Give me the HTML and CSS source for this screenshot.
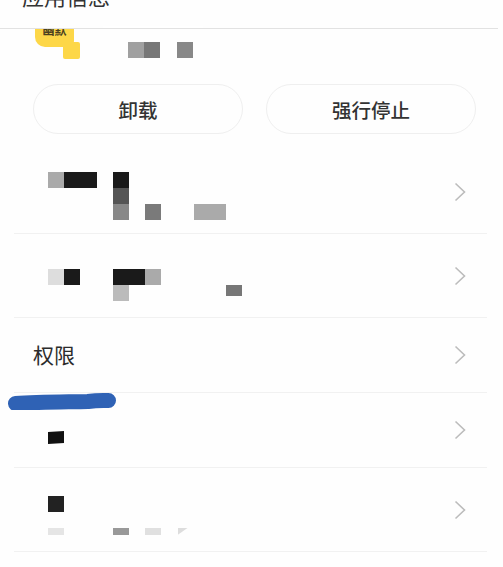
FILE: index.html
```html
<!DOCTYPE html>
<html lang="zh-CN">
<head>
<meta charset="utf-8">
<title>应用信息</title>
<link rel="stylesheet" href="styles.css">
</head>
<body>
<main class="page">
  <header class="header">
    <h1 class="title">应用信息</h1>
    <div class="header-patch"></div>
  </header>

  <section class="app">
    <div class="app-icon">
      <div class="app-icon-body"><span class="app-icon-text">幽默</span></div>
      <div class="app-icon-tail"></div>
    </div>
    <div class="line app-name"><i class="c s-a0"></i><i class="c s-77"></i><i class="c"></i><i class="c s-88"></i></div>
  </section>

  <section class="actions">
    <button class="btn" type="button">卸载</button>
    <button class="btn" type="button">强行停止</button>
  </section>

  <section class="list">
    <div class="row row-1">
      <div class="mosaic m-1">
        <div class="line"><i class="c s-aa"></i><i class="c s-1a"></i><i class="c s-1a"></i><i class="c"></i><i class="c s-1a"></i></div>
        <div class="line"><i class="c"></i><i class="c"></i><i class="c"></i><i class="c"></i><i class="c s-55"></i></div>
        <div class="line"><i class="c"></i><i class="c"></i><i class="c"></i><i class="c"></i><i class="c s-88"></i><i class="c"></i><i class="c s-7a"></i><i class="c"></i><i class="c"></i><i class="c s-aa"></i><i class="c s-aa"></i></div>
      </div>
      <svg class="chev" viewBox="0 0 12 20"><path d="M1.5 1.5 10.5 10 1.5 18.5"/></svg>
    </div>

    <div class="row row-2">
      <div class="mosaic m-2">
        <div class="line"><i class="c s-dd"></i><i class="c s-1a"></i><i class="c"></i><i class="c"></i><i class="c s-1a"></i><i class="c s-1a"></i><i class="c s-aa"></i></div>
        <div class="line"><i class="c"></i><i class="c"></i><i class="c"></i><i class="c"></i><i class="c s-bb"></i><i class="c"></i><i class="c"></i><i class="c"></i><i class="c"></i><i class="c"></i><i class="c"></i><i class="c short s-77"></i></div>
      </div>
      <svg class="chev" viewBox="0 0 12 20"><path d="M1.5 1.5 10.5 10 1.5 18.5"/></svg>
    </div>

    <div class="row row-3">
      <span class="row-label">权限</span>
      <svg class="chev" viewBox="0 0 12 20"><path d="M1.5 1.5 10.5 10 1.5 18.5"/></svg>
    </div>

    <div class="row row-4">
      <div class="mosaic m-4">
        <div class="line"><i class="c skew s-11"></i></div>
      </div>
      <svg class="chev" viewBox="0 0 12 20"><path d="M1.5 1.5 10.5 10 1.5 18.5"/></svg>
    </div>

    <div class="row row-5">
      <div class="mosaic m-5">
        <div class="line"><i class="c s-22"></i></div>
        <div class="line line-gap"><i class="c thin s-e5"></i><i class="c"></i><i class="c"></i><i class="c"></i><i class="c thin s-99"></i><i class="c"></i><i class="c thin s-e0"></i><i class="c"></i><i class="c thin tri s-dd"></i></div>
      </div>
      <svg class="chev" viewBox="0 0 12 20"><path d="M1.5 1.5 10.5 10 1.5 18.5"/></svg>
    </div>
  </section>

  <svg class="scribble" viewBox="0 0 110 18"><path d="M7.500 11.500C30 10 60 10 80 9.500 90 8 97 8.500 100.500 8.500"/></svg>
</main>
</body>
</html>
```

FILE: styles.css
```css
* { box-sizing: border-box; }

html, body {
  margin: 0;
  padding: 0;
  background: #fefefe;
}

.page {
  position: relative;
  width: 503px;
  height: 567px;
  overflow: hidden;
  font-family: "Noto Sans CJK SC", "Liberation Sans", sans-serif;
  color: #333;
}

.header {
  position: relative;
  height: 29px;
  width: 498px;
  overflow: hidden;
  border-bottom: 1px solid #e2e2e2;
  padding-left: 22px;
}

.title {
  margin: -20px 0 0;
  font-size: 22px;
  line-height: 30px;
  font-weight: 400;
  color: #333;
}

.header-patch {
  position: absolute;
  left: 103px;
  bottom: -1px;
  width: 100px;
  height: 3px;
  background: #fff;
}

.app {
  display: flex;
  align-items: flex-start;
  height: 55px;
  padding-left: 35px;
}

.app-icon {
  position: relative;
  width: 45px;
  height: 30px;
}

.app-icon-body {
  width: 39px;
  height: 18px;
  background: #fdd748;
  border-radius: 0 0 6px 10px;
  text-align: center;
  overflow: hidden;
}

.app-icon-text {
  display: block;
  margin-top: -5px;
  font-size: 12px;
  line-height: 11px;
  font-weight: 700;
  color: #4a4020;
}

.app-icon-tail {
  position: absolute;
  left: 28px;
  top: 13px;
  width: 17px;
  height: 17px;
  border-radius: 2px;
  background: #fdd748;
}

.app-name {
  margin: 13px 0 0 48px;
}

.actions {
  display: flex;
  gap: 23px;
  padding-left: 33px;
}

.btn {
  width: 210px;
  height: 50px;
  padding: 0;
  border: 1.5px solid #efefef;
  border-radius: 25px;
  background: #fefefe;
  font-family: inherit;
  font-size: 19.5px;
  font-weight: 500;
  color: #333;
}

.list {
  margin-top: 16px;
  width: 473px;
  margin-left: 14px;
}

.row {
  display: flex;
  align-items: center;
  justify-content: space-between;
  padding: 0 21px 0 34px;
  border-bottom: 1px solid #f1f1f1;
}

.row-1 { height: 84px; }
.row-2 { height: 84px; }
.row-3 { height: 75px; padding-left: 19px; }
.row-4 { height: 75px; }
.row-5 { height: 84px; }

.row-label {
  margin-top: -3px;
  font-size: 21px;
  line-height: 28px;
  color: #2c2c2c;
}

.chev {
  width: 12px;
  height: 20px;
  flex: none;
  fill: none;
  stroke: #bcbcbc;
  stroke-width: 1.6;
}

.mosaic {
  align-self: flex-start;
}

.m-1 { padding-top: 22px; }
.m-2 { padding-top: 35px; }
.m-4 { padding-top: 38px; }
.m-5 { padding-top: 28px; }

.line {
  display: flex;
  height: 16px;
}

.line-gap { margin-top: 16px; }

.c {
  display: block;
  width: 16.2px;
  height: 16px;
  flex: none;
}

.short { height: 11px; }
.thin { height: 7px; }
.skew { height: 13px; clip-path: polygon(0 8%, 100% 0, 100% 92%, 0 100%); }
.tri { width: 10px; clip-path: polygon(0 0, 100% 0, 0 100%); }

.s-11 { background: #111; }
.s-1a { background: #1a1a1a; }
.s-22 { background: #222; }
.s-55 { background: #555; }
.s-77 { background: #777; }
.s-7a { background: #7a7a7a; }
.s-88 { background: #888; }
.s-99 { background: #999; }
.s-a0 { background: #a0a0a0; }
.s-aa { background: #aaa; }
.s-bb { background: #bbb; }
.s-dd { background: #ddd; }
.s-e0 { background: #e0e0e0; }
.s-e5 { background: #e5e5e5; }

.scribble {
  position: absolute;
  left: 8px;
  top: 392px;
  width: 110px;
  height: 18px;
  fill: none;
  stroke: #2f62b5;
  stroke-width: 15;
  stroke-linecap: round;
}
```
